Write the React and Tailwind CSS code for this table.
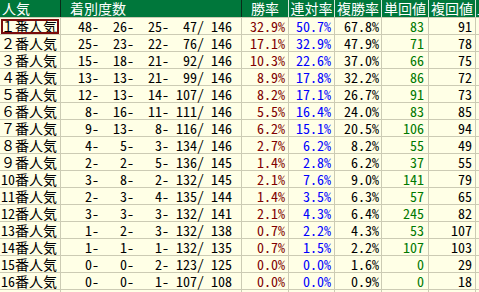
import React from "react";

const rows = [
  ["１番人気", 48, 26, 25, 47, 146, "32.9%", "50.7%", "67.8%", 83, 91],
  ["２番人気", 25, 23, 22, 76, 146, "17.1%", "32.9%", "47.9%", 71, 78],
  ["３番人気", 15, 18, 21, 92, 146, "10.3%", "22.6%", "37.0%", 66, 75],
  ["４番人気", 13, 13, 21, 99, 146, "8.9%", "17.8%", "32.2%", 86, 72],
  ["５番人気", 12, 13, 14, 107, 146, "8.2%", "17.1%", "26.7%", 91, 73],
  ["６番人気", 8, 16, 11, 111, 146, "5.5%", "16.4%", "24.0%", 83, 85],
  ["７番人気", 9, 13, 8, 116, 146, "6.2%", "15.1%", "20.5%", 106, 94],
  ["８番人気", 4, 5, 3, 134, 146, "2.7%", "6.2%", "8.2%", 55, 49],
  ["９番人気", 2, 2, 5, 136, 145, "1.4%", "2.8%", "6.2%", 37, 55],
  ["10番人気", 3, 8, 2, 132, 145, "2.1%", "7.6%", "9.0%", 141, 79],
  ["11番人気", 2, 3, 4, 135, 144, "1.4%", "3.5%", "6.3%", 57, 65],
  ["12番人気", 3, 3, 3, 132, 141, "2.1%", "4.3%", "6.4%", 245, 82],
  ["13番人気", 1, 2, 3, 132, 138, "0.7%", "2.2%", "4.3%", 53, 107],
  ["14番人気", 1, 1, 1, 132, 135, "0.7%", "1.5%", "2.2%", 107, 103],
  ["15番人気", 0, 0, 2, 123, 125, "0.0%", "0.0%", "1.6%", 0, 29],
  ["16番人気", 0, 0, 1, 107, 108, "0.0%", "0.0%", "0.9%", 0, 18],
];

const font = {
  fontFamily: '"Noto Sans Mono CJK JP", "Noto Sans CJK JP", monospace',
};

export default function App() {
  return (
    <div
      className="w-[479px] h-[292px] overflow-hidden bg-[#ffffe6] text-[14px] leading-[16px] text-black"
      style={font}
    >
      {/* header */}
      <div className="flex h-[18px] bg-[#00773b] text-white border-b border-[#cccbb4]">
        <div className="w-[61px] shrink-0 border-r border-[#0a2a18] pl-[2px] leading-[17px]">人気</div>
        <div className="w-[181px] shrink-0 border-r border-[#0a2a18] pl-[9px] leading-[17px]">着別度数</div>
        <div className="w-[47px] shrink-0 border-r border-[#d8e8dc] text-center leading-[17px]">勝率</div>
        <div className="w-[46px] shrink-0 border-r border-[#d8e8dc] text-center leading-[17px] whitespace-nowrap">連対率</div>
        <div className="w-[47px] shrink-0 border-r border-[#d8e8dc] text-center leading-[17px] whitespace-nowrap">複勝率</div>
        <div className="w-[47px] shrink-0 border-r border-[#d8e8dc] text-center leading-[17px] whitespace-nowrap">単回値</div>
        <div className="w-[47px] shrink-0 border-r border-[#d8e8dc] text-center leading-[17px] whitespace-nowrap">複回値</div>
        <div className="flex-1 overflow-hidden pl-[1px] leading-[17px] whitespace-nowrap">上</div>
      </div>

      {rows.map((r, i) => (
        <div key={i} className="flex h-[17px] border-b border-[#cccbb4]">
          <div className="w-[61px] shrink-0 border-r border-[#cccbb4] relative">
            <span className="pl-[1px] whitespace-nowrap">{r[0]}</span>
            {i === 0 && (
              <div className="absolute left-[1px] top-[1px] w-[58px] h-[15px] border-2 border-[#7a0c0c]"></div>
            )}
          </div>
          <div className="w-[181px] shrink-0 border-r border-[#cccbb4] flex justify-end pr-[9px] whitespace-nowrap">
            <span className="w-[28px] text-right">{r[1]}-</span>
            <span className="w-[35px] text-right">{r[2]}-</span>
            <span className="w-[35px] text-right">{r[3]}-</span>
            <span className="w-[35px] text-right">{r[4]}/</span>
            <span className="w-[28px] text-right">{r[5]}</span>
          </div>
          <div className="w-[47px] shrink-0 border-r border-[#cccbb4] text-right pr-[3px] text-[#800000]">{r[6]}</div>
          <div className="w-[46px] shrink-0 border-r border-[#cccbb4] text-right pr-[3px] text-[#0000ff]">{r[7]}</div>
          <div className="w-[47px] shrink-0 border-r border-[#cccbb4] text-right pr-[2px]">{r[8]}</div>
          <div className="w-[47px] shrink-0 border-r border-[#cccbb4] text-right pr-[4px] text-[#007800]">{r[9]}</div>
          <div className="w-[47px] shrink-0 border-r border-[#cccbb4] text-right pr-[3px]">{r[10]}</div>
          <div className="flex-1"></div>
        </div>
      ))}

      <div className="flex h-[17px]">
        <div className="w-[61px] shrink-0 border-r border-[#cccbb4]"></div>
        <div className="w-[181px] shrink-0 border-r border-[#cccbb4]"></div>
        <div className="w-[47px] shrink-0 border-r border-[#cccbb4]"></div>
        <div className="w-[46px] shrink-0 border-r border-[#cccbb4]"></div>
        <div className="w-[47px] shrink-0 border-r border-[#cccbb4]"></div>
        <div className="w-[47px] shrink-0 border-r border-[#cccbb4]"></div>
        <div className="w-[47px] shrink-0 border-r border-[#cccbb4]"></div>
      </div>
    </div>
  );
}
